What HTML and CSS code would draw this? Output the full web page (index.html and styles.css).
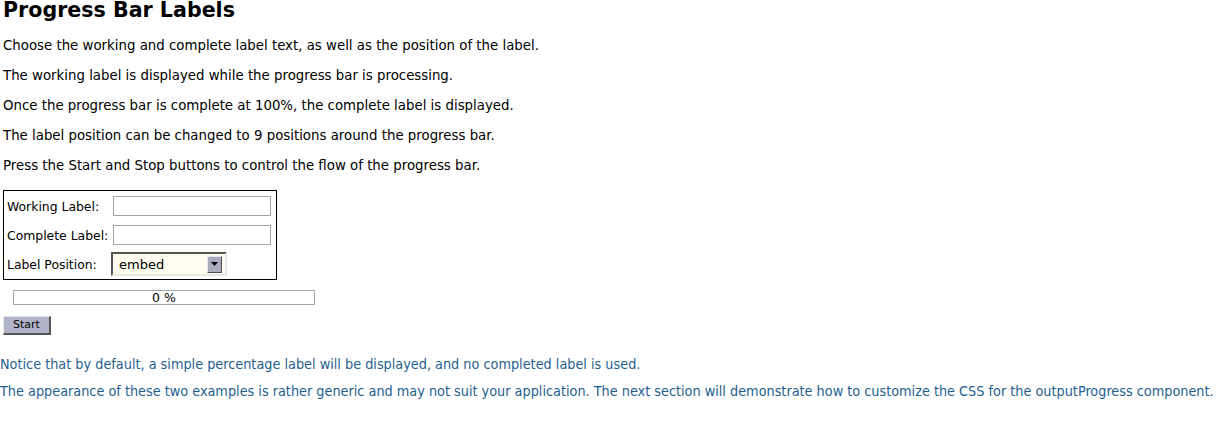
FILE: index.html
```html
<!DOCTYPE html>
<html>
<head>
<meta charset="utf-8">
<link rel="stylesheet" href="styles.css">
</head>
<body>
<div class="content">
  <h2 class="title">Progress Bar Labels</h2>
  <p class="text">Choose the working and complete label text, as well as the position of the label.</p>
  <p class="text">The working label is displayed while the progress bar is processing.</p>
  <p class="text">Once the progress bar is complete at 100%, the complete label is displayed.</p>
  <p class="text">The label position can be changed to 9 positions around the progress bar.</p>
  <p class="text">Press the Start and Stop buttons to control the flow of the progress bar.</p>
  <div class="form">
    <div class="row"><span class="label">Working Label:</span><span class="input"></span></div>
    <div class="row row-2"><span class="label">Complete Label:</span><span class="input"></span></div>
    <div class="row row-3"><span class="label">Label Position:</span>
      <span class="select"><span class="sel-text">embed</span><span class="sel-btn"><svg width="7" height="4" viewBox="0 0 7 4"><path d="M0 0H7L3.5 4Z" fill="#000"/></svg></span></span>
    </div>
  </div>
  <div class="progress">0 %</div>
  <span class="btn">Start</span>
</div>
<p class="note">Notice that by default, a simple percentage label will be displayed, and no completed label is used.</p>
<p class="note">The appearance of these two examples is rather generic and may not suit your application. The next section will demonstrate how to customize the CSS for the outputProgress component.</p>
</body>
</html>
```
FILE: styles.css
```css
body {
  margin: 0;
  font-family: "DejaVu Sans", sans-serif;
  color: #000;
  background: #fff;
}
.content {
  padding-left: 3px;
}
.title {
  font-size: 20.6px;
  font-weight: bold;
  margin: 0;
  line-height: 20px;
}
.text {
  font-size: 13.33px;
  line-height: 18px;
  margin: 0;
  padding: 6px 0;
}
.title + .text {
  margin-top: 11px;
}
.form {
  display: inline-flex;
  flex-direction: column;
  border: 1px solid #000;
  margin-top: 9px;
  padding: 5px 5px 3px 3px;
  font-size: 12.4px;
}
.row {
  display: flex;
  align-items: center;
  height: 20px;
}
.row-2 {
  margin-top: 9px;
}
.row-3 {
  margin-top: 7px;
  height: 24px;
}
.label {
  width: 106px;
}
.input {
  display: block;
  width: 156px;
  height: 18px;
  border: 1px solid #a5a5a5;
  background: #fff;
}
.select {
  display: flex;
  align-items: center;
  margin-left: -2px;
  width: 112px;
  height: 20px;
  border-top: 2px solid #555;
  border-left: 2px solid #555;
  border-right: 2px solid #e8e8e8;
  border-bottom: 2px solid #e8e8e8;
  background: #fdfcef;
  font-size: 13px;
}
.sel-text {
  flex: 1;
  padding-left: 6px;
}
.sel-btn {
  display: flex;
  align-items: center;
  justify-content: center;
  width: 13px;
  height: 15px;
  margin-right: 3px;
  background: #a9abbd;
  border-top: 1px solid #e6e6ee;
  border-left: 1px solid #e6e6ee;
  border-right: 1px solid #4a4a55;
  border-bottom: 1px solid #4a4a55;
}
.progress {
  width: 300px;
  height: 13px;
  margin: 10px 0 0 10px;
  border: 1px solid #a5a5a5;
  font-size: 12.5px;
  line-height: 13px;
  text-align: center;
}
.btn {
  display: inline-block;
  margin-top: 11px;
  font-size: 11px;
  line-height: 14px;
  padding: 1px 9px 1px 9px;
  background: #b1b3c6;
  border-top: 1px solid #e4e4ec;
  border-left: 1px solid #e4e4ec;
  border-right: 2px solid #555;
  border-bottom: 2px solid #555;
}
.note {
  font-family: "DejaVu Sans Condensed", "DejaVu Sans", sans-serif;
  font-stretch: condensed;
  color: #1f5f8f;
  font-size: 14.3px;
  line-height: 15px;
  margin: 0;
  padding: 6px 0;
}
.content + .note {
  margin-top: 16px;
}
```
